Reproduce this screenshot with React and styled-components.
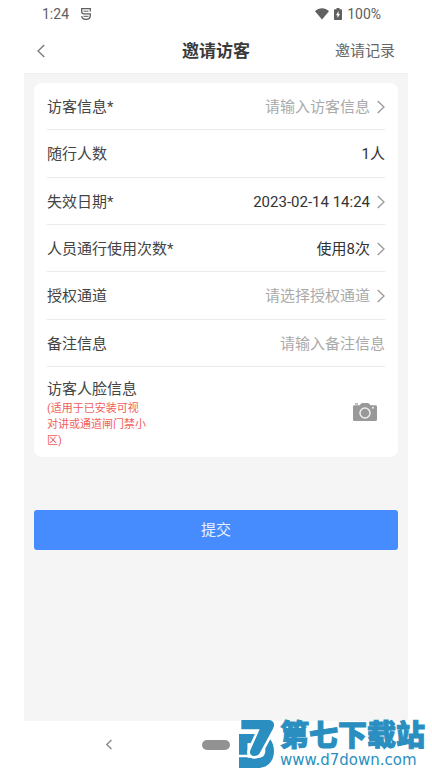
import { useState } from 'react'
import styled, { createGlobalStyle } from 'styled-components'

const GlobalStyle = createGlobalStyle`
  * {
    box-sizing: border-box;
  }

  body {
    margin: 0;
    background: #fff;
    color: #444;
    font-family: Roboto, 'Noto Sans CJK SC', sans-serif;
    font-size: 15px;
    line-height: 20px;
  }

  button,
  input {
    margin: 0;
    padding: 0;
    border: 0;
    background: none;
    color: inherit;
    font: inherit;
  }

  button {
    cursor: pointer;
  }

  svg {
    display: block;
    flex: none;
  }
`

const Screen = styled.div`
  display: flex;
  flex-direction: column;
  min-height: 100vh;
  padding: 0 24px;
`

const StatusBar = styled.div`
  display: flex;
  align-items: center;
  justify-content: space-between;
  height: 28px;
  padding: 0 27px 0 18px;
  color: #606060;
  font-size: 14px;
`

const StatusGroup = styled.div`
  display: flex;
  align-items: center;
  gap: ${({ $gap }) => $gap}px;
`

const Header = styled.header`
  display: grid;
  grid-template-columns: 1fr auto 1fr;
  align-items: center;
  height: 45px;
  padding: 0 13px;
`

const BackButton = styled.button`
  justify-self: start;
  color: #777;
`

const Title = styled.h1`
  margin: 0;
  color: #3a3a3a;
  font-size: 17px;
  font-weight: 700;
`

const HeaderLink = styled.a`
  justify-self: end;
  color: #666;
  text-decoration: none;
`

const Content = styled.form`
  display: flex;
  flex: 1;
  flex-direction: column;
  gap: 53px;
  padding: 9px 10px;
  border-top: 1px solid #efefef;
  background: #f5f5f5;
`

const Card = styled.section`
  padding: 0 13px;
  border-radius: 8px;
  background: #fff;
`

const Rows = styled.div`
  display: grid;
  grid-auto-rows: 1fr;
  height: 284px;
`

const Row = styled.div`
  display: flex;
  align-items: center;
  justify-content: space-between;
  padding-top: 2px;
  border-bottom: 1px solid #ebebeb;
`

const Label = styled.label`
  white-space: nowrap;
`

const Value = styled.button`
  display: flex;
  align-items: center;
  gap: 7px;
  color: ${({ $empty }) => ($empty ? '#aaa' : '#333')};

  svg {
    color: #999;
  }
`

const TextInput = styled.input`
  flex: 1;
  min-width: 0;
  color: #333;
  text-align: right;
  outline: none;

  &::placeholder {
    color: #aaa;
    opacity: 1;
  }
`

const Count = styled.output`
  color: #333;
`

const FaceRow = styled.div`
  display: flex;
  align-items: center;
  justify-content: space-between;
  height: 90px;
  padding-right: 8px;
`

const FaceText = styled.div`
  padding-top: 4px;
`

const FaceHint = styled.p`
  width: 100px;
  margin: 2px 0 0;
  color: #f0605a;
  font-size: 11px;
  line-height: 16px;
`

const CameraButton = styled.button`
  color: #999;
`

const SubmitButton = styled.button`
  height: 40px;
  border-radius: 3px;
  background: #468cff;
  color: #eaf3ff;
`

const NavBar = styled.nav`
  display: grid;
  grid-template-columns: repeat(3, 1fr);
  place-items: center;
  height: 47px;
  padding: 0 32px;
  color: #8c8c8c;
`

const HomePill = styled.button`
  width: 28px;
  height: 10px;
  border-radius: 5px;
  background: #929292;
`

const Watermark = styled.div`
  position: absolute;
  right: 7px;
  bottom: 0;
  display: flex;
  align-items: flex-end;
  gap: 6px;
  color: #2a8fc0;
`

const WatermarkName = styled.div`
  font-family: 'Liberation Sans', 'Noto Sans CJK SC', sans-serif;
  font-size: 29px;
  font-weight: 900;
  line-height: 32px;
  -webkit-text-stroke: 1px currentColor;
`

const WatermarkSite = styled.div`
  font-family: 'DejaVu Sans', sans-serif;
  font-size: 15px;
  line-height: 16px;
`

const Chevron = ({ left, width = 8, height = 14, stroke = 1.3 }) => (
  <svg width={width} height={height} viewBox='0 0 8 14' fill='none' stroke='currentColor' strokeWidth={stroke} aria-hidden='true'>
    <path d={left ? 'M7.3 1 1 7l6.3 6' : 'M.7 1 7 7 .7 13'} />
  </svg>
)

const KeyboardIcon = () => (
  <svg width='10' height='12' viewBox='0 0 10 12' fill='none' stroke='currentColor' aria-hidden='true'>
    <path d='M9.3 3.5V.6H.7v3c0 1.4.8 2.2 2.2 2.2h6.4v1.4c0 2.6-1.6 4.2-4.3 4.2S.8 10 .8 8' strokeWidth='1.3' />
    <path d='M2.5 3.2h5M2.5 8.3h5' />
  </svg>
)

const WifiIcon = () => (
  <svg width='14' height='12' viewBox='0 0 14 12' fill='currentColor' aria-hidden='true'>
    <path d='M0 3.2C4-.9 10-.9 14 3.2l-7 8.4z' />
  </svg>
)

const BatteryIcon = () => (
  <svg width='8' height='12' viewBox='0 0 8 12' aria-hidden='true'>
    <path d='M2.5 0h3v1.3H7c.6 0 1 .4 1 1V11c0 .6-.4 1-1 1H1c-.6 0-1-.4-1-1V2.3c0-.6.4-1 1-1h1.5z' fill='currentColor' />
    <path d='M4.6 3 2 7.2h1.5V10L6 6H4.6z' fill='#fff' />
  </svg>
)

const CameraIcon = () => (
  <svg width='24' height='18' viewBox='0 0 24 18' aria-hidden='true'>
    <path d='M2 .3h3v1.2H2z' fill='currentColor' />
    <path d='M1.5 2.2h5L8.2.6C8.6.2 9 0 9.6 0h5c.6 0 1 .2 1.4.6l1.6 1.6h4.9c.9 0 1.5.6 1.5 1.5v12.8c0 .9-.6 1.5-1.5 1.5h-21C.6 18 0 17.4 0 16.5V3.700c0-.9.6-1.500 1.500-1.500z' fill='currentColor' />
    <circle cx='12' cy='10' r='5' fill='none' stroke='#eee' strokeWidth='1.5' />
    <circle cx='20' cy='4.8' r='1' fill='#eee' />
  </svg>
)

const WatermarkLogo = () => (
  <svg width='35' height='48' viewBox='0 0 105 144' aria-hidden='true'>
    <path d='M0 42h56c30 0 49 20 49 51s-19 51-49 51H0v-32h34V70H26v34H0z' fill='currentColor' />
    <path d='M26 70h34c12 0 19 9 19 22s-8 21-20 21H26z' fill='#fff' />
    <path d='M7 0h82c15 0 20 13 13 26L62 100c-9 15-35 8-28-9l28-61H7z' fill='none' stroke='#fff' strokeWidth='16' strokeLinejoin='round' />
    <path d='M7 0h82c15 0 20 13 13 26L62 100c-9 15-35 8-28-9l28-63H7z' fill='currentColor' />
  </svg>
)

const fields = [
  { id: 'visitor', label: '访客信息*', value: '请输入访客信息', empty: true },
  { id: 'companions', label: '随行人数', value: '1人', type: 'count' },
  { id: 'expire', label: '失效日期*', value: '2023-02-14 14:24' },
  { id: 'times', label: '人员通行使用次数*', value: '使用8次' },
  { id: 'channel', label: '授权通道', value: '请选择授权通道', empty: true },
  { id: 'remark', label: '备注信息', value: '请输入备注信息', type: 'text' },
]

const FieldRow = ({ field }) => {
  const [text, setText] = useState('')

  return (
    <Row>
      <Label htmlFor={field.id}>{field.label}</Label>
      {field.type === 'text' && (
        <TextInput id={field.id} value={text} placeholder={field.value} onChange={(e) => setText(e.target.value)} />
      )}
      {field.type === 'count' && <Count id={field.id}>{field.value}</Count>}
      {!field.type && (
        <Value id={field.id} type='button' $empty={field.empty}>
          {field.value}
          <Chevron />
        </Value>
      )}
    </Row>
  )
}

const App = () => {
  return (
    <>
      <GlobalStyle />
      <Screen>
        <StatusBar>
          <StatusGroup $gap={12}>
            <span>1:24</span>
            <KeyboardIcon />
          </StatusGroup>
          <StatusGroup $gap={5}>
            <WifiIcon />
            <BatteryIcon />
            <span>100%</span>
          </StatusGroup>
        </StatusBar>
        <Header>
          <BackButton type='button' aria-label='返回'>
            <Chevron left />
          </BackButton>
          <Title>邀请访客</Title>
          <HeaderLink href='#records'>邀请记录</HeaderLink>
        </Header>
        <Content onSubmit={(e) => e.preventDefault()}>
          <Card>
            <Rows>
              {fields.map((field) => (
                <FieldRow key={field.id} field={field} />
              ))}
            </Rows>
            <FaceRow>
              <FaceText>
                <Label htmlFor='face'>访客人脸信息</Label>
                <FaceHint>(适用于已安装可视对讲或通道闸门禁小区)</FaceHint>
              </FaceText>
              <CameraButton id='face' type='button'>
                <CameraIcon />
              </CameraButton>
            </FaceRow>
          </Card>
          <SubmitButton type='submit'>提交</SubmitButton>
        </Content>
        <NavBar>
          <button type='button' aria-label='后退'>
            <Chevron left width={6} height={11} stroke={2} />
          </button>
          <HomePill type='button' aria-label='主页' />
        </NavBar>
      </Screen>
      <Watermark>
        <WatermarkLogo />
        <div>
          <WatermarkName>第七下载站</WatermarkName>
          <WatermarkSite>www.d7down.com</WatermarkSite>
        </div>
      </Watermark>
    </>
  )
}

export default App
